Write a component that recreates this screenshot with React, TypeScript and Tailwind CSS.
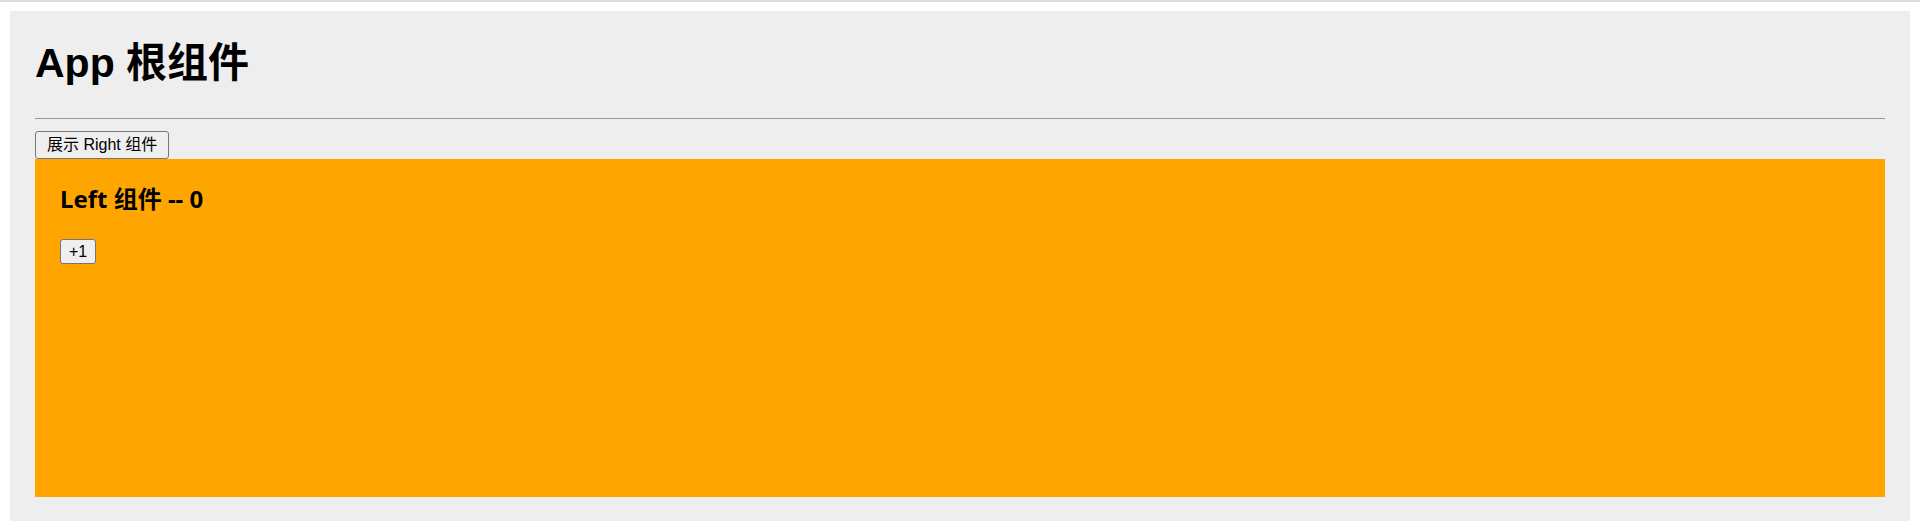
import { useState } from "react";

function Left() {
  const [count, setCount] = useState(0);

  return (
    <div className="h-[338px] bg-[#ffa500] px-[25px] pt-[25px]">
      <h3 className="m-0 text-[24px] font-bold leading-[30px] text-black [font-family:'Noto_Sans','Noto_Sans_CJK_SC',sans-serif]">
        Left 组件 -- {count}
      </h3>
      <button
        onClick={() => setCount(count + 1)}
        className="mt-[25px] h-[25px] rounded-[3px] border border-[#767676] bg-[#efefef] px-[8px] text-[16px] leading-[18px] text-black [font-family:'Liberation_Sans',sans-serif]"
      >
        +1
      </button>
    </div>
  );
}

export default function App() {
  const [showRight, setShowRight] = useState(false);

  return (
    <div className="h-[521px] overflow-hidden border-t-2 border-[#dedede] bg-white px-[10px] pt-[9px]">
      <div className="h-[510px] bg-[#eeeeee] px-[25px] pt-[29px] pb-[25px]">
        <h1 className="m-0 text-[41px] font-bold leading-[47px] text-black [font-family:'Liberation_Sans','Noto_Sans_CJK_SC',sans-serif]">
          App 根组件
        </h1>
        <hr className="mt-[31px] border-0 border-t border-[#999999]" />
        <button
          onClick={() => setShowRight(!showRight)}
          className="mt-[12px] block h-[28px] rounded-[3px] border border-[#767676] bg-[#efefef] px-[11px] text-[16px] leading-[20px] text-black [font-family:'Liberation_Sans','Noto_Sans_CJK_SC',sans-serif]"
        >
          {showRight ? "隐藏" : "展示"} Right 组件
        </button>
        <Left />
      </div>
    </div>
  );
}
